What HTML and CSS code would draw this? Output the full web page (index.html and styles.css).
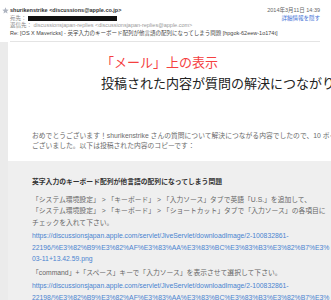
FILE: index.html
```html
<!DOCTYPE html>
<html lang="ja">
<head>
    <meta charset="UTF-8">
    <title>投稿された内容が質問の解決につながりました</title>
    <link rel="stylesheet" href="styles.css">
</head>
<body>

<div class="header">
    <div class="row">
        <div class="from">
            <svg class="star" width="7" height="7" viewBox="0 0 10 10"><polygon points="5,0.5 6.3,3.6 9.6,3.8 7.1,6 7.9,9.3 5,7.5 2.1,9.3 2.9,6 0.4,3.8 3.7,3.6" fill="#aeb4c0"/></svg>
            <b>shurikenstrike &lt;discussions@apple.co.jp&gt;</b>
        </div>
        <span class="date">2014年3月11日 14:39</span>
    </div>
    <div class="row">
        <div class="to"><span class="label">宛先：</span><span class="redacted"></span></div>
        <a class="details" href="#">詳細情報を隠す</a>
    </div>
    <div class="row">
        <div><span class="label">返信先：</span> <span class="addr">discussionsjapan-replies &lt;discussionsjapan-replies@apple.com&gt;</span></div>
    </div>
    <div class="row subject">Re: [OS X Mavericks] - 英字入力のキーボード配列が他言語の配列になってしまう問題 [hpgok-62eew-1o174t]</div>
</div>

<div class="divider"></div>

<div class="message">
    <div class="strip"></div>
    <div class="content">
        <div class="intro">
            <div class="caption">「メール」上の表示</div>
            <div class="headline">投稿された内容が質問の解決につながり</div>
        </div>

        <div class="notice">
            <div>おめでとうございます！shurikenstrike さんの質問について解決につながる内容でしたので、10 ポイン</div>
            <div>ございました。以下は投稿された内容のコピーです：</div>
        </div>

        <div class="quote">
            <div class="quote-title">英字入力のキーボード配列が他言語の配列になってしまう問題</div>
            <p>「システム環境設定」 &gt; 「キーボード」 &gt; 「入力ソース」タブで英語「U.S.」を追加して、<br>
            「システム環境設定」 &gt; 「キーボード」 &gt; 「ショートカット」タブで「入力ソース」の各項目に<br>
            チェックを入れて下さい。</p>
            <p class="link">
                <a href="#">https://discussionsjapan.apple.com/servlet/JiveServlet/downloadImage/2-100832861-</a><br>
                <a href="#">22196/%E3%82%B9%E3%82%AF%E3%83%AA%E3%83%BC%E3%83%B3%E3%82%B7%E3%</a><br>
                <a href="#">03-11+13.42.59.png</a>
            </p>
            <p>「command」+「スペース」キーで「入力ソース」を表示させて選択して下さい。</p>
            <p class="link">
                <a href="#">https://discussionsjapan.apple.com/servlet/JiveServlet/downloadImage/2-100832861-</a><br>
                <a href="#">22198/%E3%82%B9%E3%82%AF%E3%83%AA%E3%83%BC%E3%83%B3%E3%82%B7%E3%</a>
            </p>
        </div>
    </div>
</div>

</body>
</html>
```

FILE: styles.css
```css
* { margin: 0; padding: 0; box-sizing: border-box; }
body { background: #fff; width: 331px; height: 300px; overflow: hidden; font-family: "Liberation Sans", "Noto Sans CJK JP", sans-serif; color: #333; }
a { text-decoration: none; }

.header {
    width: 320px;
    padding: 7px 0 0 10px;
    font-size: 5.5px;
    line-height: 7.5px;
    white-space: nowrap;
}
.row { display: flex; justify-content: space-between; align-items: center; height: 7.5px; }
.from { position: relative; }
.star { position: absolute; left: -8px; top: 0; }
.from b { color: #333; }
.date { color: #666; }
.label { color: #888; }
.to { display: flex; align-items: center; }
.redacted { display: inline-block; width: 89px; height: 5px; background: #111; margin-left: 1px; }
.details { color: #3d6fd6; }
.addr { color: #999; }
.subject { color: #444; }

.divider { margin: 4px 0 0 10px; width: 310px; border-top: 1px solid #e4e4e4; }

.message { display: flex; height: 300px; }
.strip { width: 8px; flex: none; background: #ebebeb; }
.content { width: 600px; flex: none; white-space: nowrap; }

.intro { padding: 10px 0 0 93px; font-size: 13px; line-height: 21px; }
.caption { color: #f5403f; }
.headline { color: #222; }

.notice { padding: 37px 24px 0; font-size: 6.8px; line-height: 10px; color: #6b6b6b; }

.quote { margin-top: 10px; background: #efefef; padding: 16px 24px 20px; font-size: 6.8px; line-height: 11.5px; color: #666; }
.quote-title { font-weight: bold; color: #333; line-height: 10px; margin-bottom: 6.5px; }
.quote p { margin-bottom: 2px; }
.link a { color: #4a84d0; }
```
